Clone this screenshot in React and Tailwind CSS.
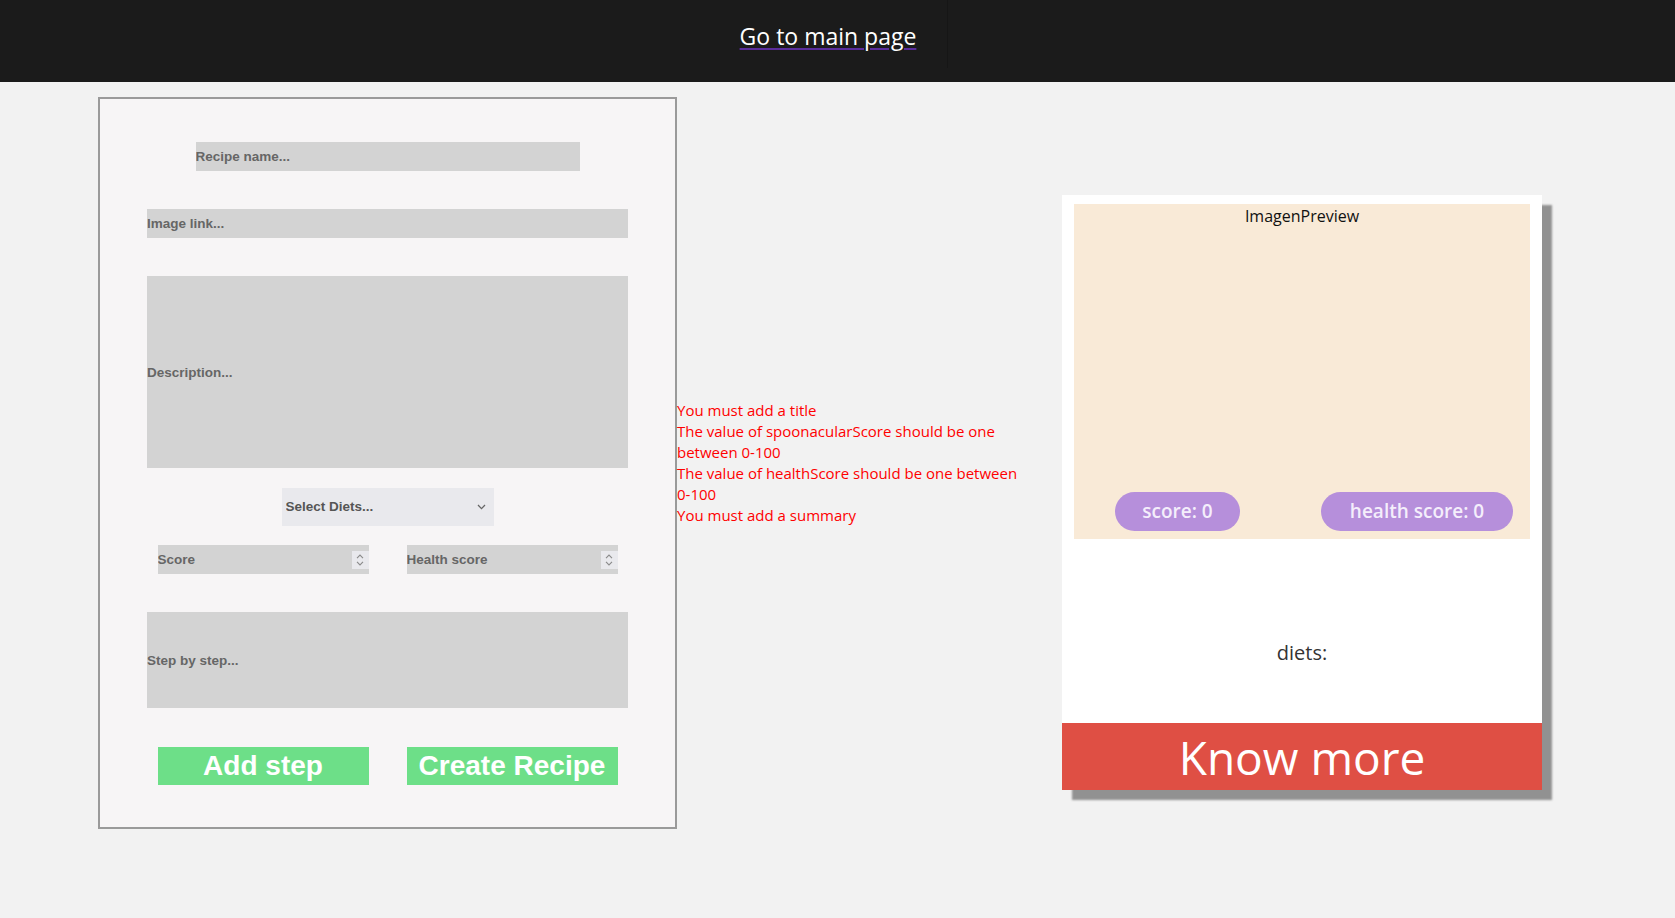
import React from "react";

const errors = [
  { text: "You must add a title" },
  { text: "The value of spoonacularScore should be one between ", range: "0-100" },
  { text: "The value of healthScore should be one between ", range: "0-100" },
  { text: "You must add a summary" },
];

function Spinner() {
  return (
    <div className="w-[17px] h-[18px] bg-[#e9e9ed] flex flex-col items-center justify-center gap-[2px]">
      <svg width="8" height="5" viewBox="0 0 8 5" fill="none">
        <path d="M1 4.2 L4 1 L7 4.2" stroke="#8a8a8a" strokeWidth="1.1" />
      </svg>
      <svg width="8" height="5" viewBox="0 0 8 5" fill="none">
        <path d="M1 0.8 L4 4 L7 0.8" stroke="#8a8a8a" strokeWidth="1.1" />
      </svg>
    </div>
  );
}

function NumberField({ placeholder }) {
  return (
    <div className="w-[211px] h-[29px] bg-[#d3d3d3] flex items-center">
      <input
        type="text"
        placeholder={placeholder}
        className="flex-1 min-w-0 h-full bg-transparent outline-none text-[13.5px] font-bold text-[#555] placeholder:text-[#666]"
      />
      <Spinner />
    </div>
  );
}

function RecipeForm() {
  return (
    <form className="w-[579px] h-[732px] border-2 border-[#9a9a9a] bg-[#f7f5f6] flex flex-col items-center pt-[43px] font-['Liberation_Sans',Arial,sans-serif]">
      <input
        placeholder="Recipe name..."
        className="w-[384px] h-[29px] bg-[#d3d3d3] outline-none text-[13.5px] font-bold text-[#555] placeholder:text-[#666]"
      />
      <input
        placeholder="Image link..."
        className="mt-[38px] w-[481px] h-[29px] bg-[#d3d3d3] outline-none text-[13.5px] font-bold text-[#555] placeholder:text-[#666]"
      />
      <input
        placeholder="Description..."
        className="mt-[38px] w-[481px] h-[192px] bg-[#d3d3d3] outline-none text-[13.5px] font-bold text-[#555] placeholder:text-[#666]"
      />
      <div className="mt-[20px] w-[212px] h-[38px] bg-[#e9e9ed] flex items-center pl-[4px] pr-[8px]">
        <select className="flex-1 h-full appearance-none bg-transparent outline-none text-[13.5px] font-bold text-[#555]">
          <option>Select Diets...</option>
        </select>
        <svg width="9" height="6" viewBox="0 0 9 6" fill="none">
          <path d="M1 1 L4.5 4.6 L8 1" stroke="#666" strokeWidth="1.3" />
        </svg>
      </div>
      <div className="mt-[19px] flex gap-[38px]">
        <NumberField placeholder="Score" />
        <NumberField placeholder="Health score" />
      </div>
      <input
        placeholder="Step by step..."
        className="mt-[38px] w-[481px] h-[96px] bg-[#d3d3d3] outline-none text-[13.5px] font-bold text-[#555] placeholder:text-[#666]"
      />
      <div className="mt-[39px] flex gap-[38px]">
        <button type="button" className="w-[211px] h-[38px] bg-[#6ddf88] text-white text-[28px] font-bold leading-none">
          Add step
        </button>
        <button type="submit" className="w-[211px] h-[38px] bg-[#6ddf88] text-white text-[28px] font-bold leading-none">
          Create Recipe
        </button>
      </div>
    </form>
  );
}

function PreviewCard() {
  return (
    <div className="mt-[98px] w-[480px] bg-white shadow-[10px_10px_2px_#919191] flex flex-col">
      <div className="px-[12px] pt-[9px]">
        <div className="h-[335px] bg-[#f9ead7] flex flex-col">
          <p className="pt-[1px] text-center text-[16px] leading-[22px] text-[#111]">ImagenPreview</p>
          <div className="flex-1" />
          <div className="flex items-center pl-[41px] pb-[8px]">
            <span className="w-[125px] h-[39px] rounded-full bg-[#b68fdb] text-[#f4eefb] text-[19px] font-semibold flex items-center justify-center">
              score: 0
            </span>
            <span className="ml-[81px] w-[192px] h-[39px] rounded-full bg-[#b68fdb] text-[#f4eefb] text-[19px] font-semibold flex items-center justify-center">
              health score: 0
            </span>
          </div>
        </div>
      </div>
      <div className="h-[184px] pt-[100px] text-center text-[20px] leading-[27px] text-[#333]">diets:</div>
      <button className="h-[67px] bg-[#df4f44] text-white text-[46px] leading-none">Know more</button>
    </div>
  );
}

export default function App() {
  return (
    <div className="min-h-screen bg-[#f2f2f2] font-['Open_Sans',sans-serif]">
      <header className="h-[82px] bg-[#1b1b1b] flex justify-center">
        <div className="w-[239px] h-[68px] mr-[18px] border-r border-[#161616] text-center pt-[21px]">
          <a
            href="#"
            className="text-[23px] leading-[31px] text-white underline decoration-[#5a2d9c] decoration-[1.5px] underline-offset-[3px]"
          >
            Go to main page
          </a>
        </div>
      </header>

      <main className="flex items-start pl-[98px] pt-[15px]">
        <div className="flex items-center">
          <RecipeForm />
          <div className="w-[385px] text-[15px] leading-[21px] text-[#ff0000]">
            <div className="w-[360px]">
              {errors.map((e) => (
                <p key={e.text}>
                  {e.text}
                  {e.range && <span className="whitespace-nowrap">{e.range}</span>}
                </p>
              ))}
            </div>
          </div>
        </div>
        <PreviewCard />
      </main>
    </div>
  );
}
